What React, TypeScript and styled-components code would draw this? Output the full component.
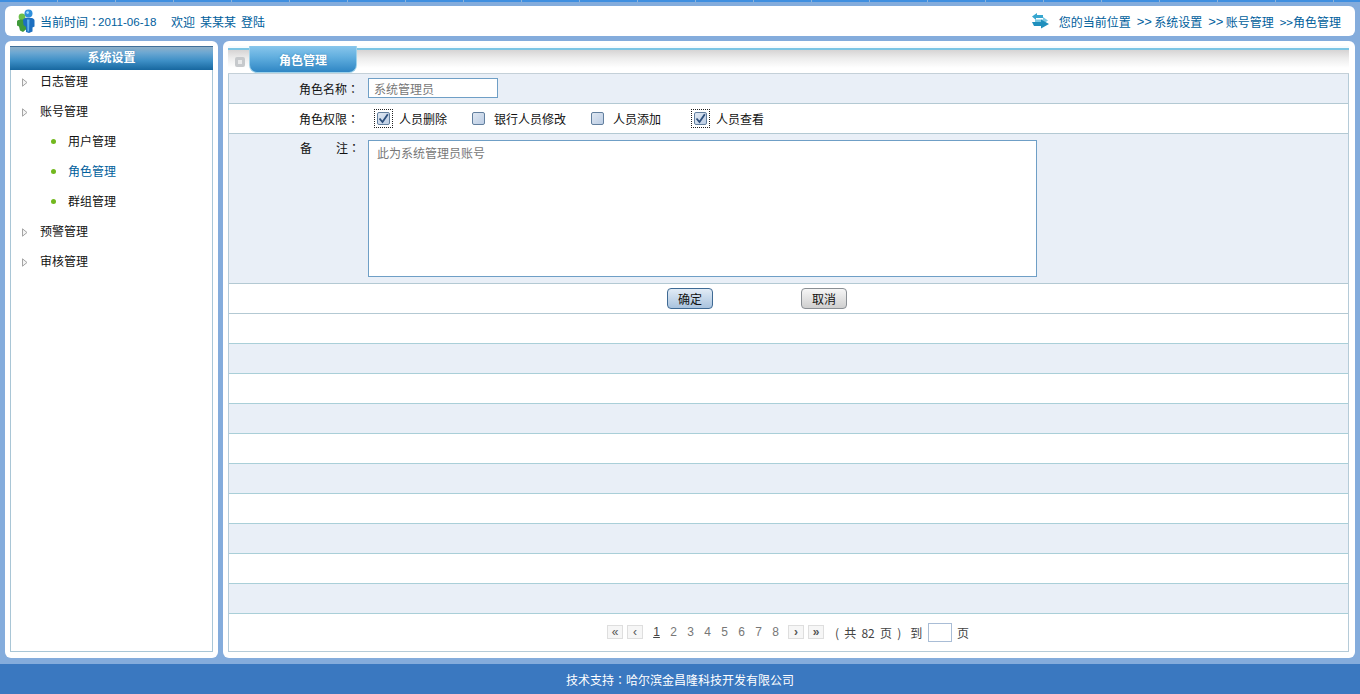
import { FC } from "react";
import styled, { createGlobalStyle } from "styled-components";

/** Side menu entries, `sub` is the second level and `active` the current page */
const MENU_ITEMS: { label: string; sub?: boolean; active?: boolean }[] = [
  { label: "日志管理" },
  { label: "账号管理" },
  { label: "用户管理", sub: true },
  { label: "角色管理", sub: true, active: true },
  { label: "群组管理", sub: true },
  { label: "预警管理" },
  { label: "审核管理" },
];

const PERMISSIONS = [
  { label: "人员删除", checked: true, width: 95 },
  { label: "银行人员修改", checked: false, width: 119 },
  { label: "人员添加", checked: false, width: 103 },
  { label: "人员查看", checked: true, width: 90 },
];

const EMPTY_ROWS = [false, true, false, true, false, true, false, true, false, true];

const PAGES = ["1", "2", "3", "4", "5", "6", "7", "8"];

const App = () => (
  <Page>
    <GlobalStyle />
    <TopStrip />
    <Header>
      <HeaderLeft>
        <UserIcon />
        <ClockLabel>
          当前时间<Colon>：</Colon>
        </ClockLabel>
        <DateText>2011-06-18</DateText>
        <Welcome>欢迎</Welcome>
        <span>某某某</span>
        <span>登陆</span>
      </HeaderLeft>
      <Crumbs>
        <ArrowsIcon />
        <CrumbText>您的当前位置</CrumbText>
        <CrumbSep>&gt;&gt;</CrumbSep>
        <span>系统设置</span>
        <CrumbSep>&gt;&gt;</CrumbSep>
        <span>账号管理</span>
        <CrumbLast>&gt;&gt;角色管理</CrumbLast>
      </Crumbs>
    </Header>

    <Body>
      <SideCard>
        <SideInner>
          <SideTitle>系统设置</SideTitle>
          <SideList>
            {MENU_ITEMS.map((item) => (
              <MenuRow key={item.label} $sub={item.sub} $active={item.active}>
                {item.sub ? <Dot /> : <MenuArrow />}
                {item.label}
              </MenuRow>
            ))}
          </SideList>
        </SideInner>
      </SideCard>

      <MainCard>
        <MainInner>
          <TabBar>
            <TabMark />
            <Tab>角色管理</Tab>
          </TabBar>

          <FormRow $shade>
            <FieldLabel>
              角色名称<Colon>：</Colon>
            </FieldLabel>
            <TextInput readOnly defaultValue="系统管理员" />
          </FormRow>

          <FormRow>
            <FieldLabel>
              角色权限<Colon>：</Colon>
            </FieldLabel>
            <Permissions>
              {PERMISSIONS.map((perm) => (
                <Permission key={perm.label} style={{ width: perm.width }}>
                  <CheckBox checked={perm.checked} />
                  <PermissionText>{perm.label}</PermissionText>
                </Permission>
              ))}
            </Permissions>
          </FormRow>

          <NoteRow>
            <NoteLabel>
              <span>备</span>
              <span>
                注<Colon>：</Colon>
              </span>
            </NoteLabel>
            <NoteArea readOnly defaultValue="此为系统管理员账号" />
          </NoteRow>

          <ButtonRow>
            <Button $primary>确定</Button>
            <Button>取消</Button>
          </ButtonRow>

          {EMPTY_ROWS.map((shade, i) => (
            <FormRow key={i} $shade={shade} $soft />
          ))}

          <Pager>
            <PagerButton>«</PagerButton>
            <PagerButton>‹</PagerButton>
            <PageNumbers>
              {PAGES.map((page, i) => (
                <PageNumber key={page} $current={i === 0}>
                  {page}
                </PageNumber>
              ))}
            </PageNumbers>
            <PagerButton $next>›</PagerButton>
            <PagerButton $next>»</PagerButton>
            <PagerTotal>
              ( 共 82 页 )<PagerTo>到</PagerTo>
            </PagerTotal>
            <PageInput />
            <span>页</span>
          </Pager>
        </MainInner>
      </MainCard>
    </Body>

    <Footer>
      技术支持<Colon>：</Colon>哈尔滨金昌隆科技开发有限公司
    </Footer>
  </Page>
);

const UserIcon = () => (
  <svg width="20" height="24" viewBox="0 0 20 24" style={{ marginRight: -1 }}>
    <circle cx="6" cy="8" r="3.4" fill="#6cbf4a" />
    <path d="M1 12.5c0-1.5 2-2 5-2s4 1 4 3v7l-3 2.5-3-1.5-1-4-2-1z" fill="#3f9a3a" />
    <circle cx="12.5" cy="4.6" r="4" fill="#2f8fdc" />
    <circle cx="11.6" cy="3.6" r="1.4" fill="#a8dcf8" />
    <path d="M7 11c0-1.6 2.4-2.2 5.5-2.2S18.500 9.500 18.500 11.500v6l-2 1v4l-3.500 1.500-3-1v-5l-2.500-2z" fill="#1c6fc0" />
    <path d="M11 10.500h2.500l-.5 12h-1.500z" fill="#5fb0ea" />
  </svg>
);

const ArrowsIcon = () => (
  <svg width="19" height="16" viewBox="0 0 19 16" style={{ marginRight: 9 }}>
    <path d="M6 0 1 3.500 5 7V5h7V2H6z" fill="#37a6cf" />
    <path d="M4 6.500h8V4l5 3.500L12 11V9H4z" fill="#7cc8e2" />
    <path d="M1 9h9V6.500l8 4.500-8 4.500V13H3z" fill="#1f8fbd" />
  </svg>
);

const MenuArrow = () => (
  <ArrowHolder width="6" height="9" viewBox="0 0 6 9">
    <path d="M.5.8 5 4.500.5 8.200z" fill="#f4f4f4" stroke="#a4a4a4" />
  </ArrowHolder>
);

const CheckBox: FC<{ checked: boolean }> = ({ checked }) => (
  <CheckFrame $focus={checked}>
    <CheckFace>
      {checked && (
        <svg width="11" height="11" viewBox="0 0 11 11">
          <path d="M1.500 5.500 4.500 9 9.800 1.200" fill="none" stroke="#2c4f7c" strokeWidth="1.800" />
        </svg>
      )}
    </CheckFace>
  </CheckFrame>
);

const GlobalStyle = createGlobalStyle`
  html, body {
    margin: 0;
    padding: 0;
    background: #84acdc;
  }
  body {
    font-family: "Noto Sans CJK SC", "Liberation Sans", sans-serif;
    font-size: 12px;
    color: #111;
  }
`;

/** The TC face centres the full width colon in its box, as the reference does */
const Colon = styled.span`
  font-family: "Noto Sans CJK TC", sans-serif;
`;

const Page = styled.div`
  width: 1360px;
  height: 694px;
  display: flex;
  flex-direction: column;
  overflow: hidden;
  background: #84acdc;
`;

const TopStrip = styled.div`
  height: 2px;
  flex: none;
  background: repeating-linear-gradient(
    90deg,
    #3f8fe0 0,
    #3f8fe0 57px,
    #8db4dc 57px,
    #8db4dc 58px
  );
`;

const Header = styled.header`
  flex: none;
  height: 30px;
  margin: 4px 5px 0;
  padding: 0 14px 0 11px;
  display: flex;
  align-items: center;
  justify-content: space-between;
  background: #fff;
  border-radius: 6px;
  color: #00609c;
`;

const HeaderLeft = styled.div`
  display: flex;
  align-items: center;
  gap: 5px;
`;

const ClockLabel = styled.span`
  margin-right: -7px;
`;

const DateText = styled.span`
  width: 60px;
  font-family: "Liberation Sans", sans-serif;
  font-size: 11.600px;
  white-space: nowrap;
`;

const Welcome = styled.span`
  margin-left: 8px;
`;

const Crumbs = styled.div`
  display: flex;
  align-items: center;
  gap: 5px;
`;

const CrumbText = styled.span`
  margin-left: -5px;
`;

const CrumbSep = styled.span`
  width: 12.500px;
  margin: 0 0 0 1px;
  font-family: "Liberation Sans", sans-serif;
  font-size: 13px;
  white-space: nowrap;
`;

const CrumbLast = styled.span`
  margin-left: 1px;
  white-space: nowrap;
`;

const Body = styled.div`
  flex: none;
  height: 617px;
  margin: 5px 5px 0;
  display: flex;
  gap: 5px;
`;

const SideCard = styled.aside`
  width: 213px;
  flex: none;
  padding: 5px 5px 6px;
  box-sizing: border-box;
  background: #fff;
  border-radius: 6px;
`;

const SideInner = styled.div`
  height: 100%;
  box-sizing: border-box;
  border: 1px solid #a9c6d6;
  border-top: 0;
`;

const SideTitle = styled.div`
  height: 24px;
  margin: 0 -1px;
  line-height: 20px;
  text-align: center;
  font-weight: 700;
  font-size: 12px;
  color: #fff;
  text-shadow: 0 0 2px #4d8ebf;
  border-top: 1px solid #40709a;
  box-sizing: border-box;
  background: linear-gradient(#8fb0c8 0, #6ba7d2 25%, #3d8fc6 60%, #17679f 100%);
`;

const SideList = styled.ul`
  margin: 0;
  padding: 0;
  list-style: none;
  display: flex;
  flex-direction: column;
  gap: 8px;
`;

const MenuRow = styled.li<{ $sub?: boolean; $active?: boolean }>`
  position: relative;
  height: 22px;
  line-height: 22px;
  padding-left: ${({ $sub }) => ($sub ? 57 : 29)}px;
  color: ${({ $active }) => ($active ? "#00609c" : "#111")};
`;

const ArrowHolder = styled.svg`
  position: absolute;
  left: 11px;
  top: 8px;
`;

const Dot = styled.i`
  position: absolute;
  left: 40px;
  top: 9px;
  width: 5px;
  height: 5px;
  border-radius: 50%;
  background: #72b81e;
`;

const MainCard = styled.main`
  flex: 1;
  padding: 5px 6px 6px 5px;
  box-sizing: border-box;
  background: #fff;
  border-radius: 6px;
`;

const MainInner = styled.div`
  height: 100%;
  box-sizing: border-box;
  display: flex;
  flex-direction: column;
  border: 1px solid #b5cbd8;
  border-top: 0;
`;

const TabBar = styled.div`
  flex: none;
  position: relative;
  height: 28px;
  margin: 0 -1px;
  box-sizing: border-box;
  border-top: 1px solid #f6fbfe;
  border-bottom: 1px solid #c4d0d8;
  background: linear-gradient(#f6fbfe 0, #f6fbfe 1px, #7cc5e4 1px, #7cc5e4 3px, #d6d4d4 3px, #ececec 11px, #fff 21px);
`;

const TabMark = styled.i`
  position: absolute;
  left: 7px;
  top: 10px;
  width: 10px;
  height: 10px;
  box-sizing: border-box;
  border: 3px solid #c6c9cc;
  border-radius: 2px;
  background: #e9eaeb;
`;

const Tab = styled.div`
  position: absolute;
  left: 21px;
  top: -1px;
  width: 108px;
  height: 27px;
  box-sizing: border-box;
  padding-top: 1px;
  line-height: 25px;
  text-align: center;
  font-weight: 700;
  color: #fff;
  text-shadow: 0 0 2px #3b84b8;
  border: 1px solid #9fd2ea;
  border-top: 0;
  border-radius: 0 0 8px 8px;
  background: linear-gradient(#88c6ec 0, #5fadde 45%, #2f86c4 100%);
`;

const FormRow = styled.div<{ $shade?: boolean; $soft?: boolean }>`
  flex: none;
  height: 30px;
  box-sizing: border-box;
  display: flex;
  align-items: center;
  background: ${({ $shade }) => ($shade ? "#e9eff7" : "#fff")};
  border-bottom: 1px solid ${({ $soft }) => ($soft ? "#a9cfd8" : "#b3c9d3")};
`;

const FieldLabel = styled.div`
  width: 130px;
  flex: none;
  margin-top: -1px;
  text-align: right;
`;

const TextInput = styled.input`
  width: 130px;
  height: 20px;
  margin: -1px 0 0 9px;
  padding: 0 5px;
  box-sizing: border-box;
  border: 1px solid #6f9fc6;
  background: #fff;
  font: inherit;
  color: #777;
  outline: none;
`;

const Permissions = styled.div`
  display: flex;
  align-items: center;
  margin-left: 15px;
`;

const Permission = styled.label`
  display: flex;
  align-items: center;
  flex: none;
  gap: 6px;
  white-space: nowrap;
`;

const PermissionText = styled.span`
  margin-top: -1px;
`;

const CheckFrame = styled.span<{ $focus: boolean }>`
  width: 19px;
  height: 19px;
  box-sizing: border-box;
  display: flex;
  align-items: center;
  justify-content: center;
  border: 1px dotted ${({ $focus }) => ($focus ? "#222" : "transparent")};
`;

const CheckFace = styled.span`
  width: 13px;
  height: 13px;
  box-sizing: border-box;
  display: flex;
  align-items: center;
  justify-content: center;
  border: 1px solid #627f9e;
  border-radius: 2px;
  background: linear-gradient(135deg, #dfe7f1, #bccde4);
`;

const NoteRow = styled.div`
  flex: none;
  height: 150px;
  box-sizing: border-box;
  display: flex;
  align-items: flex-start;
  padding-top: 6px;
  background: #e9eff7;
  border-bottom: 1px solid #b3c9d3;
`;

const NoteLabel = styled.div`
  width: 60px;
  margin-left: 71px;
  flex: none;
  display: flex;
  justify-content: space-between;
  line-height: 16px;
`;

const NoteArea = styled.textarea`
  width: 669px;
  height: 137px;
  margin-left: 8px;
  padding: 3px 8px;
  box-sizing: border-box;
  border: 1px solid #6f9fc6;
  background: #fff;
  font: inherit;
  color: #777;
  resize: none;
  outline: none;
`;

const ButtonRow = styled.div`
  flex: none;
  height: 30px;
  box-sizing: border-box;
  display: flex;
  align-items: center;
  gap: 88px;
  padding: 0 0 1px 438px;
  background: #fff;
  border-bottom: 1px solid #b3c9d3;
`;

const Button = styled.button<{ $primary?: boolean }>`
  width: 46px;
  height: 21px;
  padding: 0;
  box-sizing: border-box;
  font: inherit;
  color: #111;
  border: 1px solid ${({ $primary }) => ($primary ? "#3f6a94" : "#8a8f94")};
  border-radius: 4px;
  background: ${({ $primary }) =>
    $primary
      ? "linear-gradient(#e2ecf6, #a9c3de)"
      : "linear-gradient(#f6f6f6, #cfcfcf)"};
`;

const Pager = styled.div`
  flex: 1;
  display: flex;
  align-items: center;
  padding: 0 0 1px 378px;
  color: #444;
`;

const PagerButton = styled.span<{ $next?: boolean }>`
  width: 16px;
  height: 14px;
  margin-right: 4px;
  box-sizing: border-box;
  display: flex;
  align-items: center;
  justify-content: center;
  font-family: "Liberation Sans", sans-serif;
  font-size: 12px;
  line-height: 1;
  font-weight: ${({ $next }) => ($next ? 700 : 400)};
  color: #555;
  border: 1px solid #dedede;
  background: #f6f6f6;
`;

const PageNumbers = styled.div`
  display: flex;
  width: 141px;
  padding-left: 1px;
  box-sizing: border-box;
`;

const PageNumber = styled.span<{ $current?: boolean }>`
  width: 17px;
  text-align: center;
  font-family: "Liberation Sans", sans-serif;
  font-size: 12px;
  color: ${({ $current }) => ($current ? "#444" : "#777")};
  text-decoration: ${({ $current }) => ($current ? "underline" : "none")};
`;

const PagerTotal = styled.span`
  width: 93px;
  margin-left: 7px;
  white-space: nowrap;
  word-spacing: 2.500px;
  font-size: 12px;
`;

const PagerTo = styled.span`
  margin-left: 9px;
`;

const PageInput = styled.input`
  width: 24px;
  height: 19px;
  margin-right: 5px;
  padding: 0;
  box-sizing: border-box;
  border: 1px solid #a9bdd6;
  background: #fff;
  outline: none;
`;

const Footer = styled.footer`
  flex: none;
  height: 30px;
  margin-top: 6px;
  line-height: 32px;
  text-align: center;
  color: #fff;
  background: #3a78c0;
`;

export default App;
